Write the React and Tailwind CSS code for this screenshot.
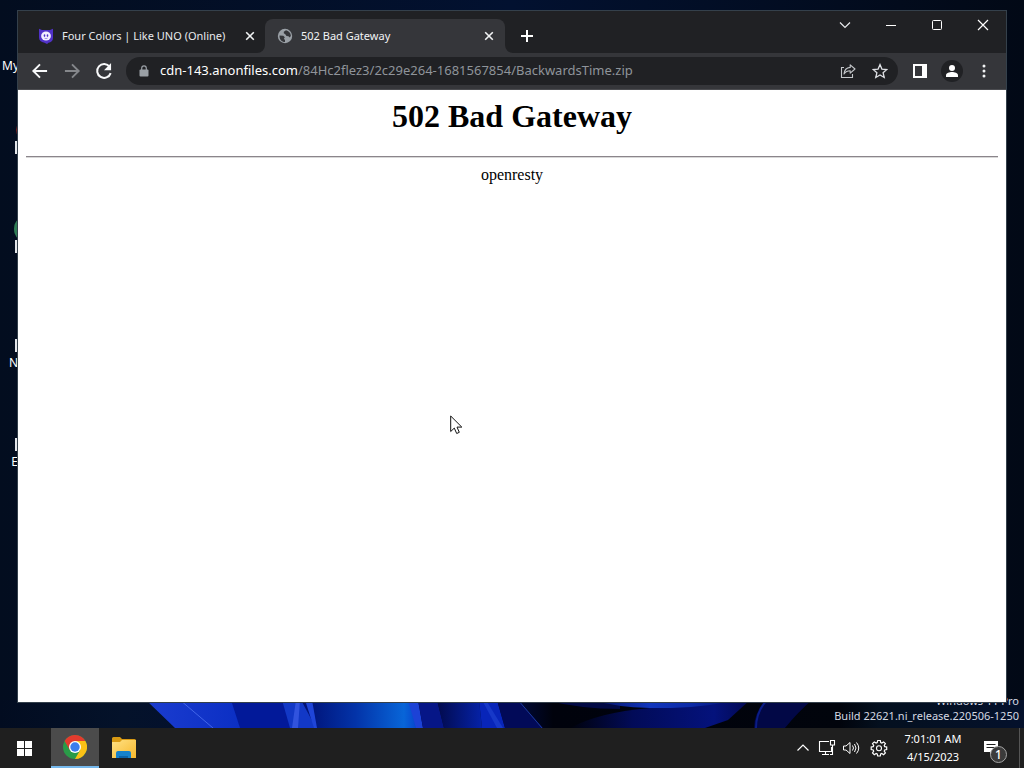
import React from 'react';

const Icon = ({ children, className = 'size-5', box = '0 0 24 24' }) => (
  <svg viewBox={box} className={className} aria-hidden="true">{children}</svg>
);

const CloseGlyph = () => (
  <Icon className="size-3" box="0 0 12 12">
    <path d="M2.2 2.2l7.6 7.6M9.8 2.2L2.2 9.8" stroke="#f1f3f4" strokeWidth="1.6" fill="none" />
  </Icon>
);

function Wallpaper() {
  return (
    <svg
      className="absolute bottom-0 left-0 h-[28px] w-full"
      viewBox="0 0 1024 28"
      preserveAspectRatio="none"
      aria-hidden="true"
    >
      <defs>
        <linearGradient id="base" x1="0" x2="1">
          <stop offset="0" stopColor="#020c20" />
          <stop offset="0.12" stopColor="#04122a" />
          <stop offset="0.5" stopColor="#000a40" />
          <stop offset="0.54" stopColor="#00020c" />
          <stop offset="0.82" stopColor="#01040c" />
          <stop offset="0.86" stopColor="#04101f" />
          <stop offset="1" stopColor="#04112c" />
        </linearGradient>
        <linearGradient id="petal" x1="0" x2="1">
          <stop offset="0" stopColor="#1b3ccf" />
          <stop offset="1" stopColor="#0b2fc4" />
        </linearGradient>
        <linearGradient id="glow" x1="0" x2="1">
          <stop offset="0" stopColor="#000f72" />
          <stop offset="0.45" stopColor="#0333a8" />
          <stop offset="0.85" stopColor="#0865d8" />
          <stop offset="1" stopColor="#0738c8" />
        </linearGradient>
        <linearGradient id="deep" x1="0" x2="1">
          <stop offset="0" stopColor="#020a4c" />
          <stop offset="1" stopColor="#0522a8" />
        </linearGradient>
        <linearGradient id="fade" x1="0" x2="1">
          <stop offset="0" stopColor="#00020c" />
          <stop offset="0.35" stopColor="#020b58" />
          <stop offset="0.8" stopColor="#04127c" />
          <stop offset="1" stopColor="#020850" />
        </linearGradient>
        <linearGradient id="arc" x1="0" x2="1">
          <stop offset="0" stopColor="#04105c" />
          <stop offset="0.4" stopColor="#1136bd" />
          <stop offset="0.7" stopColor="#0b2aa6" />
          <stop offset="1" stopColor="#031070" />
        </linearGradient>
      </defs>
      <rect width="1024" height="28" fill="url(#base)" />
      <path d="M146 0H232L241 28H175z" fill="url(#petal)" />
      <path d="M180 0L213 28" stroke="#4266e8" strokeWidth="1" />
      <path d="M231 0H283L292 28H240z" fill="#021999" />
      <path d="M282 0H303L317 28H290z" fill="#1238c6" />
      <path d="M296 0H300L298 28H292z" fill="#3153de" />
      <path d="M301 0H412L422 28H316z" fill="url(#glow)" />
      <path d="M305 0H312L317 28H314z" fill="#1f45d8" />
      <path d="M408 0H418L423 28H416z" fill="#1c42d6" />
      <path d="M418 0H437L444 28H423z" fill="#061687" />
      <path d="M437 0H479L482 28H444z" fill="url(#deep)" />
      <path d="M479 0H497L505 28H482z" fill="#0825b9" />
      <path d="M482 0H486L503 28H497z" fill="#1738c8" />
      <path d="M497 0H518L543 28H505z" fill="#020a58" />
      <path d="M518 0L542 28" stroke="#1c3c9c" strokeWidth="1" />
      <path d="M545 0H620V9Q580 9 545 0z" fill="#020a45" />
      <path d="M570 28Q600 12 650 8L750 0L728 20L705 28z" fill="url(#fade)" />
      <path d="M592 0H735Q700 9 650 8Q615 7 592 0z" fill="url(#arc)" />
      <path d="M765 0H812Q798 12 785 28H754Q754 14 765 0z" fill="#020846" />
      <path d="M767 0Q756 12 756 28" stroke="#0a1c86" strokeWidth="2" fill="none" />
    </svg>
  );
}

const shortcuts = [
  { top: 'top-[141px]', label: '' },
  { top: 'top-[240px]', label: '' },
  { top: 'top-[339px]', label: 'N' },
  { top: 'top-[438px]', label: 'E' },
];

function DesktopIcons() {
  return (
    <div className="text-[12px] leading-4 text-white">
      <span className="absolute left-[2px] top-[58px]">My</span>
      <span className="absolute left-[16px] top-[120px] h-5 w-5 rounded-full bg-[#7b2020]" />
      <span className="absolute left-[14px] top-[215px] h-7 w-7 rounded-full bg-[#2f7d55]" />
      {shortcuts.map((s) => (
        <div key={s.top} className={`absolute left-0 w-[18px] ${s.top}`}>
          <span className="ml-auto block h-[13px] w-[3px] bg-[#e4e6ea]" />
          <span className="mt-[3px] block text-right">{s.label}</span>
        </div>
      ))}
    </div>
  );
}

function TabStrip() {
  return (
    <div className="flex h-[42px] items-end bg-[#202124] pl-[7px]">
      <div className="flex h-[34px] w-60 items-center pl-[13px] pr-[9px]">
        <Icon className="size-4 shrink-0" box="0 0 16 16">
          <path d="M1 0.8L4 2h8l3-1.200v9.200c0 3-2 4.300-4.500 4.700L9 16l-2.500-1.300C3 14 1 12.500 1 9.500z" fill="#5132c8" />
          <ellipse cx="8" cy="8" rx="4.900" ry="4.500" fill="#f4efff" />
          <ellipse cx="6.500" cy="7.600" rx="0.800" ry="1.400" fill="#5132c8" />
          <ellipse cx="9.500" cy="7.600" rx="0.800" ry="1.400" fill="#5132c8" />
          <path d="M6.500 10.200q1.500 0.800 3 0" stroke="#8a74dc" strokeWidth="0.800" fill="none" />
        </Icon>
        <span className="ml-2 flex-1 truncate text-[11px] text-[#e8eaed]">Four Colors | Like UNO (Online)</span>
        <button aria-label="Close Four Colors tab"><CloseGlyph /></button>
      </div>
      <div className="relative flex h-[34px] w-60 items-center rounded-t-lg bg-[#35363a] pl-3 pr-[10px]">
        <svg viewBox="0 0 8 8" className="absolute -left-2 bottom-0 size-2" aria-hidden="true">
          <path d="M8 0v8H0a8 8 0 0 0 8-8z" fill="#35363a" />
        </svg>
        <svg viewBox="0 0 8 8" className="absolute -right-2 bottom-0 size-2" aria-hidden="true">
          <path d="M0 0v8h8a8 8 0 0 1-8-8z" fill="#35363a" />
        </svg>
        <Icon className="size-4 shrink-0" box="0 0 16 16">
          <circle cx="8" cy="8" r="7.200" fill="#9aa0a6" />
          <path d="M2.500 7.500l3.800.3 1.500 1.500-1 1.700 1.200.8v2.200C4.600 14 2.300 11.500 2.500 7.500zM9 2.300L6.800 3.700v1.500l1.500 1L9.500 8l2 .2 1 1.300 1.400-1.500C13.700 5 11.800 2.700 9 2.300z" fill="#35363a" />
        </Icon>
        <span className="ml-2 flex-1 truncate text-[11px] text-[#f1f3f4]">502 Bad Gateway</span>
        <button aria-label="Close 502 Bad Gateway tab"><CloseGlyph /></button>
      </div>
      <button aria-label="New tab" className="ml-2 flex h-[34px] w-7 items-center justify-center">
        <Icon className="size-[14px]" box="0 0 14 14">
          <path d="M7 1v12M1 7h12" stroke="#fff" strokeWidth="2" />
        </Icon>
      </button>
      <div className="ml-auto flex self-start">
        <button aria-label="Search tabs" className="flex h-7 w-[46px] items-center justify-center">
          <Icon className="size-3" box="0 0 12 12"><path d="M1 3.500l5 5 5-5" stroke="#e8eaed" strokeWidth="1.200" fill="none" /></Icon>
        </button>
        <button aria-label="Minimize" className="flex h-7 w-[46px] items-center justify-center">
          <Icon className="size-3" box="0 0 12 12"><path d="M1 6.500h10" stroke="#fff" /></Icon>
        </button>
        <button aria-label="Maximize" className="flex h-7 w-[46px] items-center justify-center">
          <Icon className="size-3" box="0 0 12 12"><rect x="1.500" y="1.500" width="9" height="9" rx="1" stroke="#fff" fill="none" /></Icon>
        </button>
        <button aria-label="Close window" className="flex h-7 w-[46px] items-center justify-center">
          <Icon className="size-3" box="0 0 12 12"><path d="M1 1l10 10M11 1L1 11" stroke="#fff" strokeWidth="1.200" /></Icon>
        </button>
      </div>
    </div>
  );
}

function Toolbar() {
  const cell = 'flex h-7 w-8 shrink-0 items-center justify-center';
  return (
    <div className="flex h-[37px] items-center border-b border-[#4b4c50] bg-[#35363a] pl-[6px] pr-[6px]">
      <button aria-label="Back" className={cell}>
        <Icon className="size-5"><path d="M20.500 12H4.500M12 4l-8 8 8 8" stroke="#f8f9fa" strokeWidth="2.300" fill="none" /></Icon>
      </button>
      <button aria-label="Forward" className={cell}>
        <Icon className="size-5"><path d="M3.500 12h16M12 4l8 8-8 8" stroke="#85878b" strokeWidth="2.300" fill="none" /></Icon>
      </button>
      <button aria-label="Reload" className={cell}>
        <Icon className="size-5">
          <path d="M18.800 7A8.300 8.300 0 1 0 20 14.500" stroke="#f8f9fa" strokeWidth="2.400" fill="none" />
          <path d="M20.500 2.500v8.500h-8.500z" fill="#f8f9fa" />
        </Icon>
      </button>
      <div className="ml-[6px] flex h-7 flex-1 items-center rounded-full bg-[#202124] pl-3 pr-[2px]">
        <Icon className="size-3 shrink-0" box="0 0 12 12">
          <rect x="1.500" y="4.500" width="9" height="7" rx="1" fill="#9aa0a6" />
          <path d="M3.700 5V3.200a2.300 2.300 0 0 1 4.600 0V5" stroke="#9aa0a6" strokeWidth="1.200" fill="none" />
        </Icon>
        <a href="#page" className="ml-[10px] flex-1 truncate text-[13px] text-[#8f949a]">
          <span className="text-white">cdn-143.anonfiles.com</span>/84Hc2flez3/2c29e264-1681567854/BackwardsTime.zip
        </a>
        <button aria-label="Share this page" className={cell}>
          <Icon className="size-4" box="0 0 16 16">
            <path d="M4 4.500H1.500v10h11V11" stroke="#c4c7ca" strokeWidth="1.100" fill="none" />
            <path d="M10.200 1.800L15 6l-4.800 4.200V7.800C7.500 7.800 5.500 8.700 4 11c.3-3.500 2.500-6.200 6.200-6.600z" stroke="#c4c7ca" strokeWidth="1.100" strokeLinejoin="round" fill="none" />
          </Icon>
        </button>
        <button aria-label="Bookmark this tab" className={cell}>
          <Icon className="size-4" box="0 0 16 16">
            <path d="M8 1.600l1.900 4.500 4.900.4-3.700 3.200 1.100 4.800L8 12l-4.200 2.500 1.100-4.800L1.200 6.500l4.900-.4z" stroke="#dfe1e5" strokeWidth="1.300" fill="none" />
          </Icon>
        </button>
      </div>
      <button aria-label="Side panel" className={`${cell} ml-[6px]`}>
        <Icon className="size-[14px]" box="0 0 14 14">
          <path d="M0 0h14v14H0zM2 2v10h7V2z" fillRule="evenodd" fill="#fff" />
        </Icon>
      </button>
      <button aria-label="Profile" className={cell}>
        <span className="flex size-[22px] items-center justify-center rounded-full bg-[#202124]">
          <Icon className="size-[14px]" box="0 0 14 14">
            <circle cx="7" cy="4" r="3" fill="#fff" />
            <path d="M1 13v-1.800C1 9 4.500 8 7 8s6 1 6 3.200V13z" fill="#fff" />
          </Icon>
        </span>
      </button>
      <button aria-label="Customize and control" className={cell}>
        <Icon className="size-4" box="0 0 16 16">
          <circle cx="8" cy="3" r="1.500" fill="#f1f3f4" /><circle cx="8" cy="8" r="1.500" fill="#f1f3f4" /><circle cx="8" cy="13" r="1.500" fill="#f1f3f4" />
        </Icon>
      </button>
    </div>
  );
}

function Taskbar() {
  return (
    <footer className="relative flex h-10 items-center bg-[#1f1f1f] text-white">
      <button aria-label="Start" className="flex h-10 w-[51px] items-center pl-[17px]">
        <Icon className="size-[15px]" box="0 0 15 15">
          <path d="M0 0h7v7H0zM8 0h7v7H8zM0 8h7v7H0zM8 8h7v7H8z" fill="#fff" />
        </Icon>
      </button>
      <button aria-label="Google Chrome" className="flex h-10 w-12 items-center justify-center border-b-2 border-[#76b9ed] bg-[#4b4b4b]">
        <Icon className="size-6">
          <circle cx="12" cy="12" r="12" fill="#2a9b48" />
          <path d="M12 6h10.400A12 12 0 0 1 12 24l5.200-9z" fill="#fbc116" />
          <path d="M1.600 6l5.200 9L12 12V6h10.400A12 12 0 0 0 1.600 6z" fill="#e33b2e" />
          <circle cx="12" cy="12" r="6" fill="#fff" />
          <circle cx="12" cy="12" r="4.700" fill="#3b7ded" />
        </Icon>
      </button>
      <button aria-label="File Explorer" className="flex h-10 w-[50px] items-center justify-center">
        <Icon className="h-[22px] w-6" box="0 0 24 22">
          <defs>
            <linearGradient id="folder" x1="0" y1="0" x2="1" y2="1">
              <stop offset="0" stopColor="#ffe184" /><stop offset="1" stopColor="#f7b82c" />
            </linearGradient>
          </defs>
          <path d="M0 1.500Q0 0 1.500 0H8l2 2h12.500Q24 2 24 3.500V8H0z" fill="#d99a13" />
          <path d="M0 5h8l2-2h14v18H0z" fill="url(#folder)" />
          <path d="M4 21v-5q0-2 2-2h11q2 0 2 2v5z" fill="#1682cb" />
          <path d="M7 21v-2h9v2z" fill="#0c63a7" />
        </Icon>
      </button>
      <div className="ml-auto flex h-10 items-center pr-[18px]">
        <button aria-label="Show hidden icons" className="flex w-6 justify-center">
          <Icon className="size-[14px]" box="0 0 14 14"><path d="M1.500 9.500L7 4l5.500 5.500" stroke="#fff" strokeWidth="1.200" fill="none" /></Icon>
        </button>
        <button aria-label="Network" className="flex w-6 justify-center">
          <Icon className="size-[18px]" box="0 0 18 18">
            <path d="M11 2.500H1.500v10h12V8M7.500 12.500v3M4 15.500h7" stroke="#fff" strokeWidth="1.100" fill="none" />
            <path d="M12.500 1.500h4v4.500h-4zM14.500 6v9.500H12" stroke="#fff" strokeWidth="1.100" fill="none" />
          </Icon>
        </button>
        <button aria-label="Volume" className="flex w-6 justify-center">
          <Icon className="size-[18px]" box="0 0 18 18">
            <path d="M1.500 7v4H4l4 3.500v-11L4 7z" stroke="#fff" fill="none" />
            <path d="M10.500 6.500q2 2.500 0 5M12.500 5q3 4 0 8M14.500 3.500q4.500 5.500 0 11" stroke="#fff" fill="none" />
          </Icon>
        </button>
        <button aria-label="Settings" className="flex w-8 justify-center">
          <Icon className="size-[18px]" box="0 0 18 18">
            <path d="M7.700 1.500h2.600l.4 2.100 1.100.5 1.800-1.200 1.800 1.800-1.200 1.800.5 1.100 2 .4v2.500l-2 .5-.5 1.100 1.200 1.800-1.800 1.800-1.800-1.200-1.100.5-.4 2H7.700l-.5-2-1.100-.5-1.800 1.200-1.800-1.800 1.200-1.800-.5-1.100-2-.5V8l2-.4.5-1.100-1.200-1.800 1.800-1.800 1.800 1.200 1.100-.5z" stroke="#fff" strokeWidth="1.200" fill="none" />
            <circle cx="9" cy="9.200" r="2.500" stroke="#fff" strokeWidth="1.100" fill="none" />
          </Icon>
        </button>
        <div className="ml-1 w-[68px] whitespace-nowrap text-center text-[11px] leading-[18px]">
          <div>7:01:01 AM</div>
          <div>4/15/2023</div>
        </div>
        <button aria-label="Notifications, 1 new" className="relative ml-[17px] flex h-[26px] w-[22px] items-center">
          <Icon className="size-4" box="0 0 16 16">
            <path d="M0 1h14v11h-5l-3 3v-3H0z" fill="#fff" />
            <path d="M2.500 4.500h9M2.500 7.500h9" stroke="#1f1f1f" />
          </Icon>
          <span className="absolute left-[6px] top-[11px] flex size-[17px] items-center justify-center rounded-full border border-[#a5a5a5] bg-[#3b3b3b] text-[12px] font-medium leading-3">1</span>
        </button>
      </div>
      <span className="absolute right-1 top-0 h-10 w-px bg-[#555]" />
    </footer>
  );
}

export default function App() {
  return (
    <div className="relative flex min-h-screen flex-col overflow-hidden bg-[#020b1c] font-['Segoe_UI','Noto_Sans',sans-serif]">
      <main className="relative flex flex-1 flex-col bg-linear-to-r from-[#030d1f] via-[#021130] to-[#020916] px-[17px] pb-[25px] pt-[10px]">
        <Wallpaper />
        <DesktopIcons />
        <div className="absolute bottom-[5px] right-[5px] text-right text-[11px] leading-[15px] text-[#d5d9e2]">
          <div>Windows 11 Pro</div>
          <div>Build 22621.ni_release.220506-1250</div>
        </div>
        <section className="relative flex flex-1 flex-col border border-[#34404b]" aria-label="Browser window">
          <TabStrip />
          <Toolbar />
          <div id="page" className="flex-1 bg-white px-2 pt-2 text-center font-['Liberation_Serif',serif] text-[16px] leading-[18px] text-black">
            <h1 className="text-[32px] font-bold leading-[37px]">502 Bad Gateway</h1>
            <hr className="mb-2 mt-[21px] h-[2px] border-0 border-b border-t border-b-[#d8d8d8] border-t-[#8b858b]" />
            <p>openresty</p>
          </div>
        </section>
      </main>
      <Taskbar />
      <svg viewBox="0 0 13 20" className="absolute left-[450px] top-[415px] h-5 w-[13px]" aria-hidden="true">
        <path d="M0.700 1v15.500l3.600-3.400 2.400 5.400 2.600-1.200-2.300-5.200h4.800z" fill="#fff" stroke="#111" strokeWidth="1" />
      </svg>
    </div>
  );
}
